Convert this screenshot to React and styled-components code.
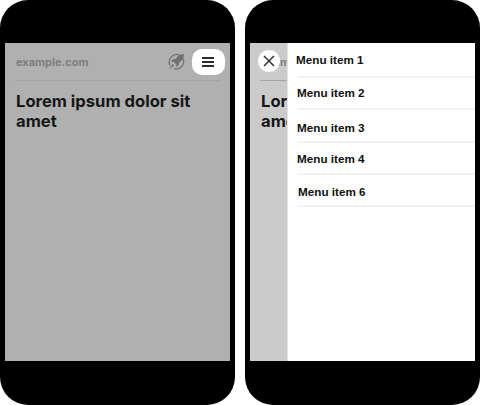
import React from 'react'
import styled, { createGlobalStyle } from 'styled-components'

const items = [
  { label: 'Menu item 1', indent: 9, height: 35, nudge: 0 },
  { label: 'Menu item 2', indent: 10, height: 32, nudge: -1 },
  { label: 'Menu item 3', indent: 10, height: 33, nudge: 2 },
  { label: 'Menu item 4', indent: 10, height: 32, nudge: 0 },
  { label: 'Menu item 6', indent: 11, height: 32, nudge: 1 },
]

const PageContent = () => (
  <>
    <Header>
      <Domain>example.com</Domain>
      <RocketIcon />
    </Header>
    <Title>Lorem ipsum dolor sit amet</Title>
  </>
)

const RocketIcon = () => (
  <RocketSvg viewBox="0 0 20 20">
    <path d="M13.5 3.300A8 8 0 0 0 3.200 14.200M16.800 6.500A8 8 0 0 1 7.500 17.600" fill="none" stroke="#707070" strokeWidth="1.300" />
    <path d="M18 2c-3.800.2-6.700 1.900-8.900 5l-2.900.6L4.200 10l3 .5 2.300 2.300.5 3 2.400-2 .6-2.900c3.100-2.200 4.800-5.100 5-8.900z" fill="#707070" />
    <path d="M5.800 12.500 2.200 18l5.400-3.700z" fill="#707070" />
  </RocketSvg>
)

const App = () => (
  <>
    <GlobalStyle />
    <Stage>
      <Phone>
        <Screen $bg="#b0b0b0">
          <PageContent />
          <MenuToggle aria-label="Open menu">
            <svg width="12" height="10" viewBox="0 0 12 10">
              <path d="M0 1h12M0 5h12M0 9h12" stroke="#2c2c2c" strokeWidth="2" />
            </svg>
          </MenuToggle>
        </Screen>
      </Phone>
      <Phone>
        <Screen $bg="#cbcbcb">
          <PageContent />
          <CloseButton aria-label="Close menu">
            <svg width="12" height="12" viewBox="0 0 12 12">
              <path d="M1 1l10 10M11 1L1 11" stroke="#333" strokeWidth="1.500" />
            </svg>
          </CloseButton>
          <Drawer>
            {items.map((item) => (
              <MenuRow key={item.label} $height={item.height}>
                <MenuLabel $indent={item.indent} $nudge={item.nudge}>{item.label}</MenuLabel>
              </MenuRow>
            ))}
          </Drawer>
        </Screen>
      </Phone>
    </Stage>
  </>
)

export default App

const GlobalStyle = createGlobalStyle`
  body {
    margin: 0;
    background: #fff;
    font-family: "Liberation Sans", Arial, sans-serif;
  }
`
const Stage = styled.div`
  display: flex;
  gap: 10px;
  width: 480px;
  height: 405px;
  overflow: hidden;
`
const Phone = styled.div`
  box-sizing: border-box;
  width: 235px;
  height: 405px;
  padding: 43px 5px 44px;
  background: #000;
  border-radius: 28px;
`
const Screen = styled.div`
  position: relative;
  box-sizing: border-box;
  height: 318px;
  padding: 0 10px;
  overflow: hidden;
  background: ${(p) => p.$bg};
`
const Header = styled.div`
  display: flex;
  align-items: center;
  justify-content: space-between;
  height: 37px;
  padding: 0 34px 0 1px;
  border-bottom: 1px solid #a4a4a4;
`
const Domain = styled.span`
  font-family: Inter, "Liberation Sans", sans-serif;
  font-size: 11px;
  font-weight: 700;
  color: #7e7e7e;
`
const RocketSvg = styled.svg`
  width: 19px;
  height: 19px;
`
const Title = styled.h1`
  margin: 10px 0 0;
  padding-left: 1px;
  font-family: Inter, "Liberation Sans", sans-serif;
  font-size: 16.6px;
  line-height: 20px;
  font-weight: 700;
  color: #161616;
`
const MenuToggle = styled.button`
  position: absolute;
  top: 6px;
  right: 5px;
  display: flex;
  align-items: center;
  justify-content: center;
  width: 33px;
  height: 26px;
  padding: 0 1px 0 0;
  border: 0;
  border-radius: 10px;
  background: #fff;
`
const CloseButton = styled.button`
  position: absolute;
  top: 7px;
  left: 8px;
  display: flex;
  align-items: center;
  justify-content: center;
  width: 22px;
  height: 22px;
  padding: 0;
  border: 0;
  border-radius: 50%;
  background: #fff;
`
const Drawer = styled.nav`
  position: absolute;
  top: 0;
  right: 0;
  bottom: 0;
  width: 188px;
  background: #fff;
  border-left: 1px solid #e4e4e4;
  box-sizing: border-box;
`
const MenuRow = styled.div`
  display: flex;
  align-items: center;
  box-sizing: border-box;
  height: ${(p) => p.$height}px;
  margin-left: 10px;
  border-bottom: 2px solid #f2f2f2;
`
const MenuLabel = styled.span`
  margin-left: ${(p) => p.$indent - 11}px;
  transform: translateY(${(p) => p.$nudge}px);
  font-size: 11.7px;
  font-weight: 700;
  color: #111;
`
